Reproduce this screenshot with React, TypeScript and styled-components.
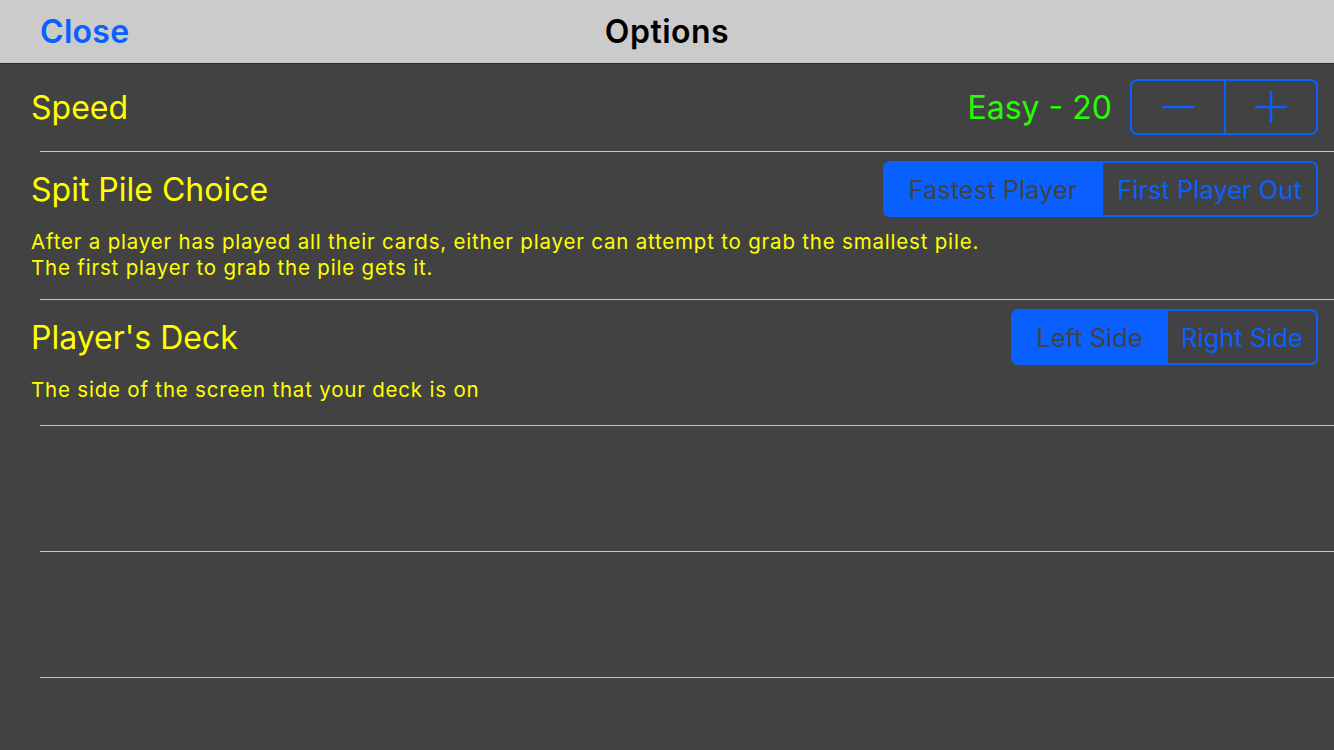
import React, { useState } from "react";
import styled, { createGlobalStyle } from "styled-components";

const GlobalStyle = createGlobalStyle`
  html, body {
    margin: 0;
    padding: 0;
    background: #424242;
  }
  body {
    font-family: Inter, "Open Sans", "Liberation Sans", sans-serif;
  }
`;

const BLUE = "#0a60ff";

const Screen = styled.div`
  width: 1334px;
  height: 750px;
  background: #424242;
  overflow: hidden;
`;

const NavBar = styled.div`
  height: 63px;
  background: #cbcbcb;
  border-bottom: 1px solid #2e2e2e;
  display: grid;
  grid-template-columns: 1fr auto 1fr;
  align-items: center;
  padding: 0 40px;
`;

const CloseButton = styled.button`
  justify-self: start;
  background: none;
  border: none;
  padding: 0;
  color: ${BLUE};
  font-family: inherit;
  font-size: 32px;
  font-weight: 600;
  letter-spacing: 0.3px;
  cursor: pointer;
`;

const Title = styled.div`
  color: #000;
  font-size: 32px;
  font-weight: 600;
  letter-spacing: 0.5px;
`;

const Row = styled.div<{ $h: number }>`
  height: ${(p) => p.$h}px;
  box-sizing: border-box;
  padding: 0 16px 0 31px;
  position: relative;
  display: flex;
  flex-direction: column;
  &::after {
    content: "";
    position: absolute;
    left: 40px;
    right: 0;
    bottom: 0;
    height: 1px;
    background: #c4c4c4;
  }
`;

const RowHead = styled.div<{ $top: number }>`
  display: flex;
  align-items: center;
  justify-content: space-between;
  margin-top: ${(p) => p.$top}px;
  height: 56px;
`;

const Label = styled.div`
  color: #ffff00;
  font-size: 32px;
  font-weight: 400;
`;

const Description = styled.div`
  color: #ffff00;
  font-size: 20.5px;
  letter-spacing: 0.8px;
  line-height: 26px;
  margin-top: 12px;
`;

const Controls = styled.div`
  display: flex;
  align-items: center;
  gap: 18px;
`;

const Value = styled.div`
  color: #22ff00;
  font-size: 32px;
`;

const Stepper = styled.div`
  display: flex;
  border: 2px solid ${BLUE};
  border-radius: 7px;
  height: 52px;
  overflow: hidden;
`;

const StepButton = styled.button`
  width: 92px;
  background: none;
  border: none;
  display: flex;
  align-items: center;
  justify-content: center;
  cursor: pointer;
  & + & {
    border-left: 2px solid ${BLUE};
  }
`;

const Segmented = styled.div`
  display: flex;
  border: 2px solid ${BLUE};
  border-radius: 7px;
  height: 52px;
  overflow: hidden;
`;

const Segment = styled.button<{ $active: boolean; $w: number }>`
  width: ${(p) => p.$w}px;
  background: ${(p) => (p.$active ? BLUE : "transparent")};
  color: ${(p) => (p.$active ? "#424242" : BLUE)};
  border: none;
  font-family: inherit;
  font-size: 25.5px;
  padding: 0;
  cursor: pointer;
  & + & {
    border-left: 2px solid ${BLUE};
  }
`;

function MinusIcon() {
  return (
    <svg width="32" height="32" viewBox="0 0 32 32">
      <line x1="0" y1="16" x2="32" y2="16" stroke={BLUE} strokeWidth="2.5" />
    </svg>
  );
}

function PlusIcon() {
  return (
    <svg width="32" height="32" viewBox="0 0 32 32">
      <line x1="0" y1="16" x2="32" y2="16" stroke={BLUE} strokeWidth="2.5" />
      <line x1="16" y1="0" x2="16" y2="32" stroke={BLUE} strokeWidth="2.5" />
    </svg>
  );
}

export default function App() {
  const [speed, setSpeed] = useState(20);
  const [pile, setPile] = useState(0);
  const [side, setSide] = useState(0);

  return (
    <Screen>
      <GlobalStyle />
      <NavBar>
        <CloseButton>Close</CloseButton>
        <Title>Options</Title>
        <div />
      </NavBar>

      <Row $h={88}>
        <RowHead $top={15}>
          <Label>Speed</Label>
          <Controls>
            <Value>Easy - {speed}</Value>
            <Stepper>
              <StepButton onClick={() => setSpeed(speed - 1)}>
                <MinusIcon />
              </StepButton>
              <StepButton onClick={() => setSpeed(speed + 1)}>
                <PlusIcon />
              </StepButton>
            </Stepper>
          </Controls>
        </RowHead>
      </Row>

      <Row $h={148}>
        <RowHead $top={9}>
          <Label>Spit Pile Choice</Label>
          <Segmented>
            <Segment $w={216} $active={pile === 0} onClick={() => setPile(0)}>
              Fastest Player
            </Segment>
            <Segment $w={215} $active={pile === 1} onClick={() => setPile(1)}>
              First Player Out
            </Segment>
          </Segmented>
        </RowHead>
        <Description>
          After a player has played all their cards, either player can attempt
          to grab the smallest pile.
          <br />
          The first player to grab the pile gets it.
        </Description>
      </Row>

      <Row $h={126}>
        <RowHead $top={9}>
          <Label>Player's Deck</Label>
          <Segmented>
            <Segment $w={153} $active={side === 0} onClick={() => setSide(0)}>
              Left Side
            </Segment>
            <Segment $w={150} $active={side === 1} onClick={() => setSide(1)}>
              Right Side
            </Segment>
          </Segmented>
        </RowHead>
        <Description>The side of the screen that your deck is on</Description>
      </Row>

      <Row $h={126} />
      <Row $h={126} />
    </Screen>
  );
}
